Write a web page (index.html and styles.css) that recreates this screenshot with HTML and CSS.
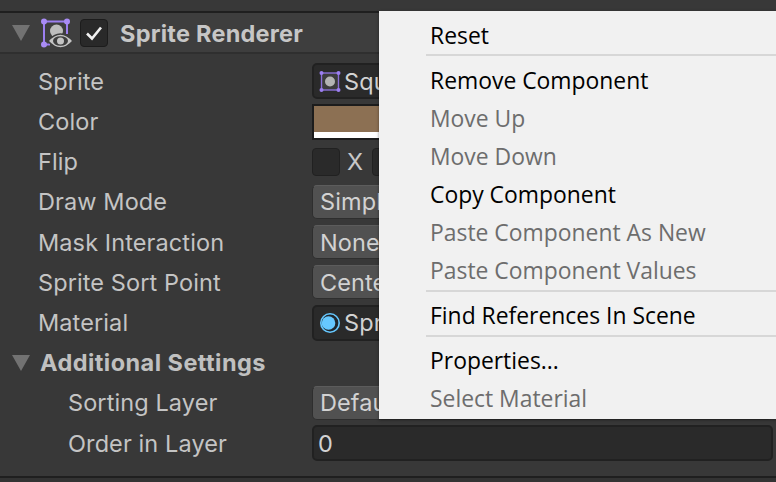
FILE: index.html
```html
<!DOCTYPE html>
<html lang="en">
<head>
<meta charset="utf-8">
<title>Sprite Renderer</title>
<link rel="stylesheet" href="styles.css">
</head>
<body>
<div class="inspector">
  <div class="topbar"></div>
  <div class="header">
    <span class="tri"></span>
    <svg class="comp-icon" width="32" height="32" viewBox="0 0 32 32">
      <path d="M3 4.500H26M3 4.500V27.500M26 4.500V17M3 27.500H9" fill="none" stroke="#9c7ff0" stroke-width="2"/>
      <circle cx="3" cy="4.500" r="3" fill="#a98cf5"/>
      <circle cx="26" cy="4.500" r="3" fill="#a98cf5"/>
      <circle cx="3" cy="27.500" r="3" fill="#a98cf5"/>
      <circle cx="15.500" cy="14" r="6.500" fill="#bdbdbd"/>
      <path d="M7 24Q19.500 10 32 24Q19.500 38 7 24Z" fill="#c4c4c4" stroke="#3e3e3e" stroke-width="1.500"/>
      <ellipse cx="19.500" cy="24" rx="7.500" ry="4.800" fill="#3e3e3e"/>
      <circle cx="19.500" cy="24" r="3.500" fill="#c4c4c4"/>
    </svg>
    <span class="check">
      <svg width="18" height="16" viewBox="0 0 18 16"><path d="M2 8.500L7 13.500L16 2.500" fill="none" stroke="#f0f0f0" stroke-width="2.600"/></svg>
    </span>
    <span class="title">Sprite Renderer</span>
  </div>
  <div class="body">
    <div class="row">
      <span class="label">Sprite</span>
      <div class="field dark">
        <svg class="sprite-icon" width="22" height="22" viewBox="0 0 22 22">
          <rect x="2.500" y="3" width="17" height="17" fill="#3c3c3c" stroke="#8a6fd8" stroke-width="1.400"/>
          <circle cx="2.500" cy="3" r="2" fill="#9c7ff0"/><circle cx="19.500" cy="3" r="2" fill="#9c7ff0"/>
          <circle cx="2.500" cy="20" r="2" fill="#9c7ff0"/><circle cx="19.500" cy="20" r="2" fill="#9c7ff0"/>
          <circle cx="11" cy="11.500" r="5" fill="#b4b4b4"/>
        </svg>
        <span>Square</span>
      </div>
    </div>
    <div class="row">
      <span class="label">Color</span>
      <div class="swatch"><div class="swatch-color"></div><div class="swatch-alpha"></div></div>
    </div>
    <div class="row">
      <span class="label">Flip</span>
      <div class="flip">
        <span class="box"></span><span class="axis">X</span>
        <span class="box"></span><span class="axis">Y</span>
      </div>
    </div>
    <div class="row"><span class="label">Draw Mode</span><div class="field popup">Simple</div></div>
    <div class="row"><span class="label">Mask Interaction</span><div class="field popup">None</div></div>
    <div class="row"><span class="label">Sprite Sort Point</span><div class="field popup">Center</div></div>
    <div class="row">
      <span class="label">Material</span>
      <div class="field dark">
        <svg class="mat-icon" width="22" height="22" viewBox="0 0 22 22">
          <circle cx="11" cy="11" r="10" fill="#66c8ff"/>
          <circle cx="11" cy="11" r="8.400" fill="#20262c"/>
          <circle cx="9.500" cy="11" r="6.800" fill="#66c8ff"/>
        </svg>
        <span>Sprites-Default</span>
      </div>
    </div>
    <div class="row"><span class="tri small"></span><span class="section">Additional Settings</span></div>
    <div class="row"><span class="label sub">Sorting Layer</span><div class="field popup">Default</div></div>
    <div class="row"><span class="label sub">Order in Layer</span><div class="field dark value">0</div></div>
  </div>
  <div class="bottomline"></div>
</div>
<div class="menu">
  <div class="item">Reset</div>
  <div class="sep"></div>
  <div class="item">Remove Component</div>
  <div class="item off">Move Up</div>
  <div class="item off">Move Down</div>
  <div class="item">Copy Component</div>
  <div class="item off">Paste Component As New</div>
  <div class="item off">Paste Component Values</div>
  <div class="sep"></div>
  <div class="item">Find References In Scene</div>
  <div class="sep"></div>
  <div class="item">Properties...</div>
  <div class="item off">Select Material</div>
</div>
</body>
</html>
```
FILE: styles.css
```css
* { box-sizing: border-box; }
html, body { margin: 0; height: 100%; overflow: hidden; background: #383838; }
body { position: relative; font-family: Inter, "Liberation Sans", sans-serif; }
.inspector { width: 776px; height: 482px; display: flex; flex-direction: column; color: #c4c4c4; font-size: 23.500px; letter-spacing: 0.100px; }
.topbar { background: #383838; border-bottom: 2px solid #1f1f1f; flex: none; height: 13px; }
.header { height: 41px; flex: none; display: flex; align-items: center; background: #3e3e3e; border-bottom: 2px solid #2f2f2f; padding-left: 12px; }
.tri { width: 0; height: 0; border-left: 9px solid transparent; border-right: 9px solid transparent; border-top: 16px solid #727272; flex: none; }
.comp-icon { margin-left: 11px; flex: none; }
.check { width: 28px; height: 28px; margin-left: 7px; border-radius: 4px; background: #292929; border: 1px solid #1c1c1c; display: flex; align-items: center; justify-content: center; flex: none; }
.title { margin-left: 12px; padding-top: 2px; font-weight: 700; color: #c6c6c6; letter-spacing: 0.250px; }
.body { flex: 1; padding-top: 7.300px; min-height: 0; }
.row { height: 40.200px; display: flex; align-items: center; padding-left: 38px; }
.label { width: 274px; flex: none; }
.label.sub { padding-left: 30px; }
.field { width: 461px; height: 34px; border-radius: 5px; display: flex; align-items: center; padding-left: 7px; color: #d2d2d2; flex: none; white-space: nowrap; }
.popup { background: #515151; border: 1px solid #2e2e2e; border-top-color: #5c5c5c; }
.dark { background: #2a2a2a; border: 2px solid #212121; height: 36px; padding-left: 5px; gap: 3px; }
.value { padding-left: 4px; }
.swatch { width: 461px; height: 36px; border: 2px solid #1c1c1c; display: flex; flex-direction: column; flex: none; }
.swatch-color { flex: 1; background: #8c7053; }
.swatch-alpha { height: 6px; background: #fff; }
.flip { display: flex; align-items: center; color: #c8c8c8; }
.box { width: 28px; height: 28px; border-radius: 4px; background: #2a2a2a; border: 1px solid #212121; }
.axis { width: 32px; padding-left: 7px; }
.tri.small { margin-left: -26px; }
.section { margin-left: 10px; font-weight: 700; color: #c0c0c0; letter-spacing: 0.450px; }
.bottomline { height: 6px; flex: none; background: #333; border-top: 2px solid #1f1f1f; }
.menu { position: absolute; left: 379px; top: 11px; width: 420px; height: 408px; background: #f1f1f1; box-shadow: 0 1px 3px rgba(0,0,0,.4); padding-top: 4px; font-family: "Open Sans", "Noto Sans", sans-serif; font-size: 22.900px; color: #000; }
.item { height: 38.100px; line-height: 38px; padding: 1.600px 0 0 51px; white-space: nowrap; }
.off { color: #6d6d6d; }
.sep { height: 2px; margin: 1px 0 4px 47px; background: #d7d7d7; }
```
